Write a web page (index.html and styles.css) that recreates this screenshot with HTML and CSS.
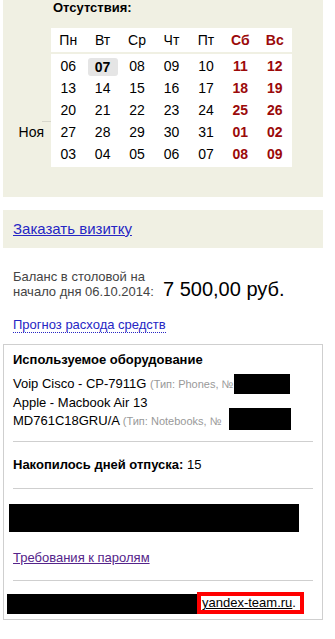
FILE: index.html
```html
<!DOCTYPE html>
<html lang="ru">
<head>
<meta charset="utf-8">
<link rel="stylesheet" href="styles.css">
</head>
<body>
<div class="page">
  <section class="panel absence">
    <div class="absence-title">Отсутствия:</div>
    <div class="cal">
      <div class="cal-spacer"></div>
      <div class="cal-head">
        <span>Пн</span><span>Вт</span><span>Ср</span><span>Чт</span><span>Пт</span><span class="we">Сб</span><span class="we">Вс</span>
      </div>
      <div class="cal-months">
        <span></span><span></span><span></span><span class="month">Ноя</span><span></span>
      </div>
      <div class="cal-body">
        <span>06</span><span><b class="today">07</b></span><span>08</span><span>09</span><span>10</span><span class="we">11</span><span class="we">12</span>
        <span>13</span><span>14</span><span>15</span><span>16</span><span>17</span><span class="we">18</span><span class="we">19</span>
        <span>20</span><span>21</span><span>22</span><span>23</span><span>24</span><span class="we">25</span><span class="we">26</span>
        <span>27</span><span>28</span><span>29</span><span>30</span><span>31</span><span class="we">01</span><span class="we">02</span>
        <span>03</span><span>04</span><span>05</span><span>06</span><span>07</span><span class="we">08</span><span class="we">09</span>
      </div>
    </div>
  </section>

  <section class="panel card-order">
    <a href="#" class="link-big">Заказать визитку</a>
  </section>

  <section class="balance">
    <div class="balance-label">Баланс в столовой на<br>начало дня 06.10.2014:</div>
    <div class="balance-sum">7 500,00 руб.</div>
  </section>

  <div class="forecast"><a href="#" class="link-dotted">Прогноз расхода средств</a></div>

  <section class="box">
    <div class="box-title">Используемое оборудование</div>
    <div class="equip first">Voip Cisco - CP-7911G <span class="meta">(Тип: Phones, №</span><span class="redact r1"></span></div>
    <div class="equip">Apple - Macbook Air 13</div>
    <div class="equip">MD761C18GRU/A <span class="meta">(Тип: Notebooks, №</span><span class="redact r2"></span></div>
    <hr class="sep">
    <div class="vacation"><b>Накопилось дней отпуска:</b> 15</div>
    <hr class="sep">
    <div class="redact r3"></div>
    <div class="pw"><a href="#" class="link-visited">Требования к паролям</a></div>
    <hr class="sep">
    <div class="mail">
      <span class="redact r4"></span><span class="mail-mark"><a href="#" class="mail-link">yandex-team.ru</a>.</span>
    </div>
  </section>
</div>
</body>
</html>
```

FILE: styles.css
```css
* { box-sizing: border-box; }
html, body { margin: 0; padding: 0; background: #fff; }
body {
  font-family: "Liberation Sans", Arial, sans-serif;
  font-size: 13px;
  color: #000;
  width: 335px;
}
.page { padding-left: 3px; width: 323px; }

.panel { background: #f0f0e3; width: 320px; }

.absence { padding-bottom: 30px; }
.absence-title {
  font-weight: bold;
  font-size: 13px;
  line-height: 16px;
  padding-left: 50px;
  margin-bottom: 12px;
}
.cal {
  display: grid;
  grid-template-columns: 48px 241px;
  row-gap: 2px;
}
.cal-head {
  display: grid;
  grid-template-columns: repeat(7, 1fr);
  background: #fff;
  height: 24px;
  align-items: center;
  text-align: center;
  font-size: 14px;
}
.cal-months {
  display: grid;
  grid-auto-rows: 22px;
  padding-top: 1px;
}
.cal-months span {
  display: flex;
  align-items: center;
  justify-content: flex-end;
  padding-right: 7px;
  font-size: 14px;
}
.cal-months .month {
  background: linear-gradient(#d6d6cc, #d6d6cc) right top / 9px 1px no-repeat;
}
.cal-body {
  display: grid;
  grid-template-columns: repeat(7, 1fr);
  grid-auto-rows: 22px;
  padding: 1px 0 2px;
  background: #fff;
  align-items: center;
  text-align: center;
  font-size: 14px;
}
.we { color: #9b0a0a; font-weight: bold; }
.today {
  display: inline-block;
  width: 30px;
  height: 18px;
  line-height: 18px;
  margin-top: 2px;
  background: #e5e5e5;
  border-radius: 3px;
  font-weight: bold;
}

.card-order {
  margin-top: 13px;
  padding: 10px 10px 9px;
  line-height: 18px;
}
.link-big { color: #2626c4; font-size: 15px; text-decoration: underline; }

.balance {
  display: flex;
  align-items: flex-end;
  margin-top: 21px;
  padding-left: 10px;
}
.balance-label {
  color: #444;
  font-size: 13px;
  line-height: 15px;
  width: 150px;
}
.balance-sum {
  font-size: 20px;
  line-height: 20px;
  margin-bottom: 0;
}

.forecast {
  margin-top: 18px;
  padding-left: 10px;
  line-height: 16px;
}
.link-dotted {
  color: #2626c4;
  text-decoration: none;
  border-bottom: 1px dotted #2626c4;
}

.box {
  margin-top: 11px;
  width: 320px;
  border: 1px solid #cfcfcf;
  padding: 7px 9px 3px 9px;
}
.box-title { font-weight: bold; line-height: 16px; }
.equip { line-height: 18px; white-space: nowrap; }
.equip.first { margin-top: 7px; }
.meta { color: #999; font-size: 11px; }
.redact { display: inline-block; background: #000; vertical-align: middle; }
.r1 { width: 56px; height: 20px; margin-left: 1px; margin-top: -2px; }
.r2 { width: 62px; height: 22px; margin-left: 8px; margin-top: -4px; }
.sep {
  border: 0;
  border-top: 1px solid #cfcfcf;
  margin: 11px 0 0;
  height: 0;
}
.vacation { margin-top: 15px; line-height: 16px; }
.box .sep + .vacation + .sep { margin-top: 15px; }
.r3 {
  display: block;
  width: 290px;
  height: 28px;
  margin: 15px 0 0 -4px;
}
.pw { margin-top: 18px; line-height: 16px; }
.link-visited { color: #55248a; text-decoration: underline; }
.pw + .sep { margin-top: 14px; }
.mail {
  display: flex;
  align-items: flex-start;
  margin: 11px 0 0 -6px;
  height: 24px;
}
.r4 { width: 193px; height: 20px; margin-top: 2px; }
.mail-mark {
  margin-left: -3px;
  border: 4px solid #f00;
  background: #fff;
  height: 22px;
  line-height: 14px;
  padding: 0 4px 0 1px;
  position: relative;
}
.mail-link { color: #000; text-decoration: underline; }
```
